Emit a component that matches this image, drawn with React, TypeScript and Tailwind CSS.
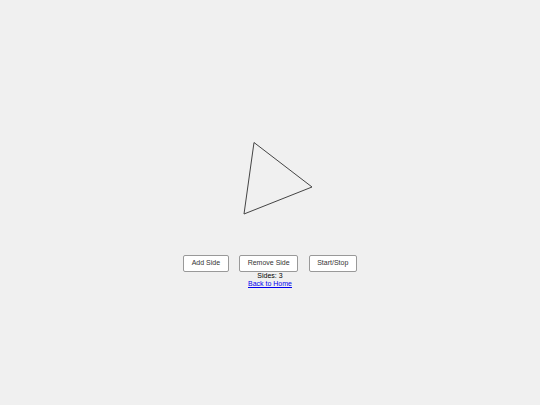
import { useState } from 'react';

export default function App() {
  const [sides] = useState(3);

  return (
    <div className="w-full h-[405px] bg-[#f0f0f0] flex flex-col items-center pt-[131px] font-['Liberation_Sans',Arial,sans-serif]">
      <svg width="120" height="100" viewBox="0 0 120 100">
        <polygon points="44,11.5 102,56 34,83" fill="none" stroke="#444" strokeWidth="1" />
      </svg>
      <div className="mt-[23.5px] flex gap-[10.5px]">
        <button className="h-[17px] px-[7.5px] text-[7px] text-[#333] bg-white border border-[#999] rounded-[2px]">Add Side</button>
        <button className="h-[17px] px-[7.5px] text-[7px] text-[#333] bg-white border border-[#999] rounded-[2px]">Remove Side</button>
        <button className="h-[17px] px-[7.5px] text-[7px] text-[#333] bg-white border border-[#999] rounded-[2px]">Start/Stop</button>
      </div>
      <div className="text-[7px] leading-[8px] text-black">Sides: {sides}</div>
      <a href="#" className="text-[7px] leading-[8px] text-[#0000ee] underline">Back to Home</a>
    </div>
  );
}
